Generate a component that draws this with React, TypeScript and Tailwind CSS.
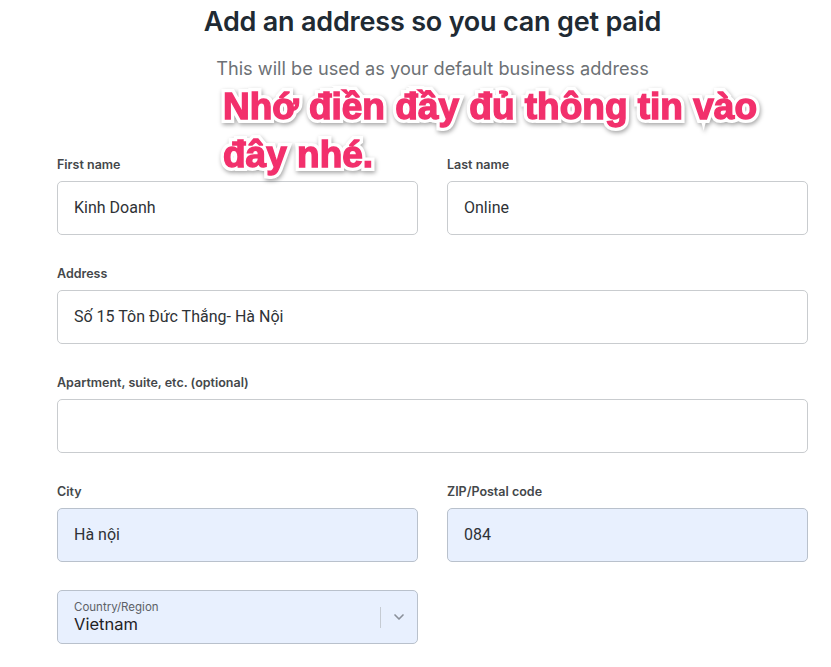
import { ChevronDown } from "lucide-react"

const Label = ({ text }: { text: string }) => (
    <div className="h-[17px] mb-[8px] text-[12.5px] leading-[17px] font-semibold text-[#44474a] font-['Inter',sans-serif]">
        {text}
    </div>
)

const Field = ({ label, value, filled }: { label: string; value: string; filled?: boolean }) => (
    <div className="flex-1 min-w-0 pb-[30px]">
        <Label text={label} />
        <div
            className={`h-[54px] rounded-[5px] border px-[16px] flex items-center text-[16px] text-[#2e3236] font-['Roboto',sans-serif] ${
                filled ? "bg-[#e8f0fe] border-[#b9c1cc]" : "bg-white border-[#c9cccf]"
            }`}>
            {value}
        </div>
    </div>
)

const Note = () => (
    <div className="absolute left-[223px] top-[83px] text-[37px] leading-[48px] font-bold font-['Liberation_Sans',sans-serif] [filter:drop-shadow(1px_2px_2px_rgba(0,0,0,0.35))]">
        {/* white outline underneath, pink slightly thickened on top */}
        <div className="text-white [-webkit-text-stroke:8px_white]">
            <div>Nhớ điền đầy đủ thông tin vào</div>
            <div>đây nhé.</div>
        </div>
        <div className="absolute inset-0 text-[#f2306c] [-webkit-text-stroke:1.4px_#f2306c]">
            <div>Nhớ điền đầy đủ thông tin vào</div>
            <div>đây nhé.</div>
        </div>
    </div>
)

export default function App() {
    return (
        <div className="relative min-h-[667px] w-full bg-white pl-[57px] pr-[23px] pt-[4px]">
            <h1 className="text-center text-[27px] leading-[36px] font-semibold text-[#202a33] font-['Inter',sans-serif] tracking-[-0.2px]">
                Add an address so you can get paid
            </h1>
            <p className="mt-[16px] text-center text-[18.2px] leading-[24px] text-[#6d7175] font-['Inter',sans-serif]">
                This will be used as your default business address
            </p>

            <div className="mt-[76px] flex flex-col">
                <div className="flex gap-[29px]">
                    <Field label="First name" value="Kinh Doanh" />
                    <Field label="Last name" value="Online" />
                </div>
                <Field label="Address" value="Số 15 Tôn Đức Thắng- Hà Nội" />
                <Field label="Apartment, suite, etc. (optional)" value="" />
                <div className="flex gap-[29px]">
                    <Field label="City" value="Hà nội" filled />
                    <Field label="ZIP/Postal code" value="084" filled />
                </div>
                <div className="flex gap-[29px] -mt-[2px]">
                    <div className="flex-1 min-w-0">
                        <div className="h-[54px] rounded-[5px] border border-[#b9c1cc] bg-[#e8f0fe] pl-[16px] pr-[10px] flex items-center">
                            <div className="flex-1 flex flex-col">
                                <span className="text-[11.5px] leading-[14px] text-[#5c6066] font-['Inter',sans-serif]">
                                    Country/Region
                                </span>
                                <span className="text-[16.5px] leading-[20px] text-[#1f2225] font-['Inter',sans-serif]">
                                    Vietnam
                                </span>
                            </div>
                            <div className="w-px h-[21px] bg-[#c5cbd3]" />
                            <ChevronDown className="ml-[10px] w-[16px] h-[16px] text-[#8a9099]" strokeWidth={2.5} />
                        </div>
                    </div>
                    <div className="flex-1" />
                </div>
            </div>

            <Note />
        </div>
    )
}
